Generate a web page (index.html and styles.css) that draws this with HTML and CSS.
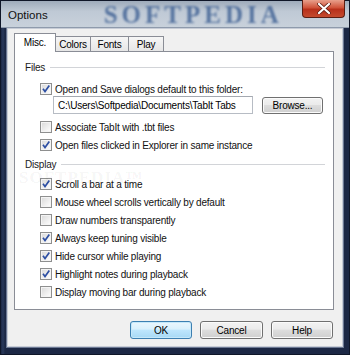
FILE: index.html
```html
<!DOCTYPE html>
<html>
<head>
<title>Options</title>
<meta charset="UTF-8">
<link rel="stylesheet" href="styles.css">
</head>
<body>

<div class="window">
  <!-- Title bar -->
  <div class="titlebar">
    <span class="title">Options</span>
    <span class="brand">SOFTPEDIA</span>
    <div class="close">
      <svg width="14" height="11" viewBox="0 0 14 11"><path d="M2 1 L12 10 M12 1 L2 10" stroke="#5a1a10" stroke-width="3.6" stroke-linecap="round"/><path d="M2 1 L12 10 M12 1 L2 10" stroke="#fff" stroke-width="2.2" stroke-linecap="round"/></svg>
    </div>
  </div>

  <div class="frame">
    <div class="client">
      <div class="tabs">
        <div class="tab selected">Misc.</div>
        <div class="tab t-colors">Colors</div>
        <div class="tab t-fonts">Fonts</div>
        <div class="tab t-play">Play</div>
      </div>

      <div class="panel">
        <div class="group">Files</div>
        <div class="check on first"><span class="box"></span>Open and Save dialogs default to this folder:</div>
        <div class="pathrow">
          <div class="textbox">C:\Users\Softpedia\Documents\TabIt Tabs</div>
          <div class="btn browse">Browse...</div>
        </div>
        <div class="check gap"><span class="box"></span>Associate TabIt with .tbt files</div>
        <div class="check on"><span class="box"></span>Open files clicked in Explorer in same instance</div>

        <div class="group display">Display</div>
        <div class="check on"><span class="box"></span>Scroll a bar at a time</div>
        <div class="check"><span class="box"></span>Mouse wheel scrolls vertically by default</div>
        <div class="check"><span class="box"></span>Draw numbers transparently</div>
        <div class="check on"><span class="box"></span>Always keep tuning visible</div>
        <div class="check on"><span class="box"></span>Hide cursor while playing</div>
        <div class="check on"><span class="box"></span>Highlight notes during playback</div>
        <div class="check"><span class="box"></span>Display moving bar during playback</div>

        <span class="mark">SOFTPEDIA&trade;</span>
      </div>

      <div class="actions">
        <div class="btn default">OK</div>
        <div class="btn cancel">Cancel</div>
        <div class="btn">Help</div>
      </div>
    </div>
  </div>
</div>

</body>
</html>
```

FILE: styles.css
```css
* {
  box-sizing: border-box;
}

body {
  margin: 0;
  font-family: "Liberation Sans", Arial, sans-serif;
  font-size: 10px;
  letter-spacing: -0.2px;
  color: #000;
}

/* Outer window frame */
.window {
  width: 350px;
  height: 355px;
  display: flex;
  flex-direction: column;
  background: #1f2b47;
  border: 1px solid #0f1628;
}

.titlebar {
  position: relative;
  height: 27px;
  flex: none;
  display: flex;
  align-items: center;
  background: linear-gradient(#9eabbb, #bfc9d5 40%, #c8d1db);
  border-bottom: 1px solid #8e9aac;
}

.title {
  font-size: 11.5px;
  letter-spacing: 0;
  margin-left: 7px;
  margin-top: 1px;
  color: #111;
}

.brand {
  margin-left: 56px;
  font-family: "Liberation Serif", serif;
  font-weight: bold;
  font-size: 25px;
  line-height: 25px;
  letter-spacing: 4px;
  color: #3f6194;
  filter: blur(1px);
  opacity: 0.8;
}

/* close button sits over the title bar */
.close {
  position: absolute;
  top: -1px;
  right: 4px;
  width: 43px;
  height: 18px;
  border: 1px solid #5b1d12;
  border-top: none;
  border-radius: 0 0 4px 4px;
  background: linear-gradient(#e8a08c, #d0533a 45%, #b8301b 55%, #c44a2e);
  display: flex;
  align-items: center;
  justify-content: center;
}

.frame {
  flex: 1;
  padding: 0 5px 7px;
  background: linear-gradient(90deg, #1c2845, #2a3a5c 2px, #1c2845 4px);
}

.client {
  height: 100%;
  margin: 0 1px;
  background: #f0f0f0;
  border: 1px solid #c7ccd6;
  box-shadow: 0 0 0 1px #6b7893;
  padding: 4px 8px 0 6px;
}

/* Tabs */
.tabs {
  display: flex;
  align-items: flex-end;
  height: 18px;
  padding-left: 1px;
}

.tab {
  height: 15px;
  border: 1px solid #8a8d96;
  border-bottom: none;
  margin-left: -1px;
  background: linear-gradient(#f6f6f6, #e6e6e6);
  display: flex;
  align-items: center;
  justify-content: center;
}

.tab.selected {
  height: 19px;
  width: 42px;
  margin-bottom: -1px;
  background: #fff;
  position: relative;
  z-index: 1;
  padding-bottom: 2px;
}

.t-colors { width: 36px; }
.t-fonts { width: 39px; }
.t-play { width: 36px; }

.panel {
  position: relative;
  width: 320px;
  height: 259px;
  background: #fff;
  border: 1px solid #8a8d96;
  padding: 6px 8px 0 10px;
}

/* Group header with etched line */
.group {
  height: 18px;
  display: flex;
  align-items: center;
  color: #1a1a1a;
}

.group::after {
  content: "";
  flex: 1;
  margin-left: 5px;
  margin-top: 1px;
  border-top: 1px solid #d2d4d8;
  border-bottom: 1px solid #fff;
}

.group.display {
  margin-top: 1px;
  margin-bottom: 2px;
}

.check {
  height: 18px;
  display: flex;
  align-items: center;
  padding-left: 15px;
  color: #111;
  white-space: nowrap;
}

.check.first {
  margin-top: 4px;
}

.check.gap {
  margin-top: 4px;
}

.box {
  width: 12px;
  height: 12px;
  margin-right: 3px;
  border: 1px solid #8e8f8f;
  background: linear-gradient(135deg, #d8d8d8, #f4f4f4 70%, #fff);
  box-shadow: inset 0 0 0 1px #f4f4f4;
  flex: none;
}

.check.on .box {
  background: url("data:image/svg+xml;utf8,<svg xmlns='http://www.w3.org/2000/svg' width='10' height='10'><path d='M2 4.8 L4 7.5 L8.3 1.5' fill='none' stroke='%232d4fa3' stroke-width='1.7'/></svg>") center no-repeat,
    linear-gradient(135deg, #d8d8d8, #f4f4f4 70%, #fff);
}

.pathrow {
  display: flex;
  align-items: center;
  margin-top: -2px;
  padding-left: 28px;
}

.textbox {
  width: 200px;
  height: 18px;
  border: 1px solid #b7bcc4;
  border-top-color: #a4a9b1;
  background: #fff;
  padding-left: 4px;
  display: flex;
  align-items: center;
  white-space: nowrap;
  overflow: hidden;
}

.btn {
  width: 62px;
  height: 18px;
  border: 1px solid #707070;
  border-radius: 3px;
  background: linear-gradient(#f3f3f3, #ebebeb 45%, #dddddd 50%, #cfcfcf);
  box-shadow: inset 0 0 0 1px #fbfbfb;
  display: flex;
  align-items: center;
  justify-content: center;
}

.btn.browse {
  margin-left: 9px;
  width: 61px;
  height: 17px;
}

.btn.default {
  border-color: #3c7fb1;
  background: linear-gradient(#eaf6fd, #d9f0fc 45%, #bee6fd 50%, #a7d9f5);
  box-shadow: inset 0 0 0 1px #c5e8fa;
}

.btn.cancel {
  width: 63px;
}

.actions {
  display: flex;
  justify-content: flex-end;
  gap: 8px;
  margin-top: 11px;
  padding-right: 1px;
}

/* faint watermark over the panel */
.mark {
  position: absolute;
  left: 4px;
  top: 116px;
  font-family: "Liberation Serif", serif;
  font-weight: bold;
  font-size: 17px;
  letter-spacing: 1px;
  color: rgba(0, 0, 0, 0.05);
}
```
